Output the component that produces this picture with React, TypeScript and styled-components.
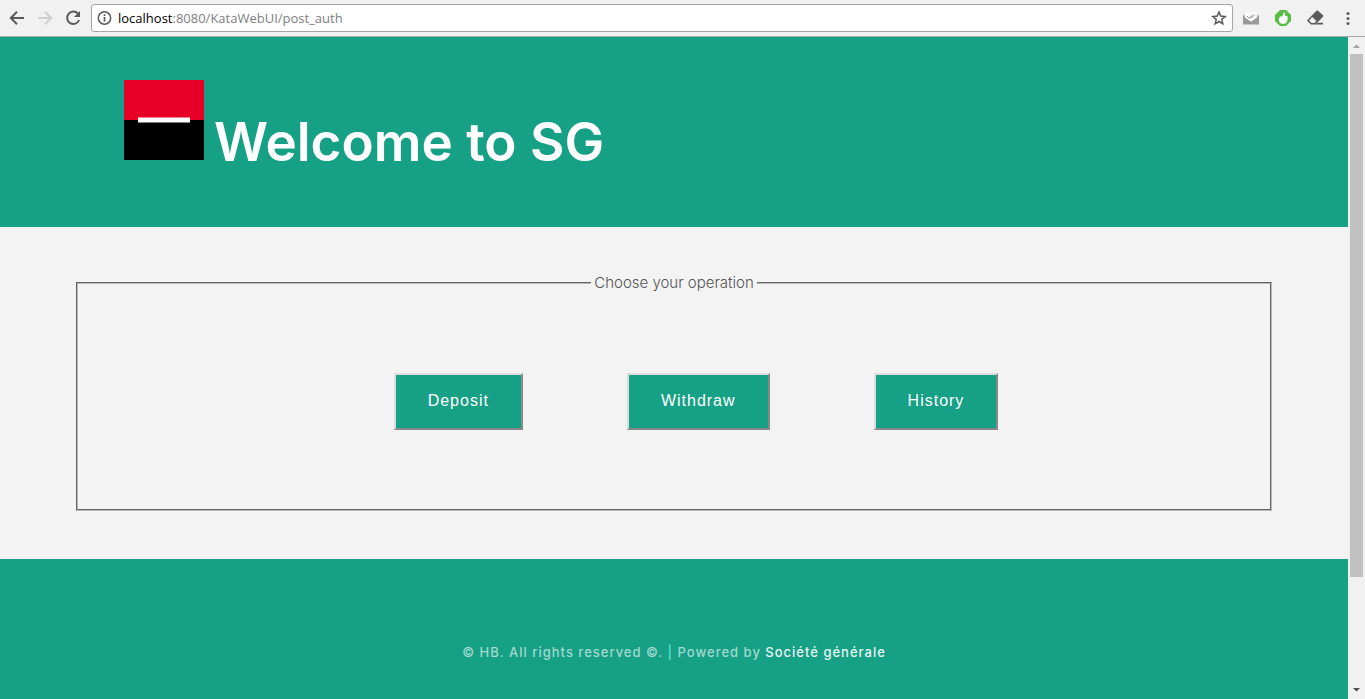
import React from "react";
import styled, { createGlobalStyle } from "styled-components";

const GlobalStyle = createGlobalStyle`
  * { box-sizing: border-box; }
  body { margin: 0; background: #f3f3f3; }
`;

const Window = styled.div`
  display: flex;
  flex-direction: column;
  height: 100vh;
  overflow: hidden;
`;

const Toolbar = styled.div`
  display: flex;
  flex: none;
  align-items: center;
  height: 37px;
  padding: 0 9px 0 8px;
  background: #f1f1f1;
  border-bottom: 1px solid #a9a9a9;
`;

const IconButton = styled.button<{ $gap?: number }>`
  display: flex;
  flex: none;
  padding: 0;
  margin-right: ${(p) => p.$gap ?? 0}px;
  border: 0;
  background: none;
  color: #5a5a5a;
  &:disabled { color: #d0d0d0; }
`;

const AddressBar = styled.div`
  display: flex;
  flex: 1;
  align-items: center;
  gap: 6px;
  height: 28px;
  margin-right: 9px;
  padding: 0 5px;
  background: #fff;
  border: 1px solid #a6a6a6;
  border-radius: 3px;
`;

const Url = styled.span`
  flex: 1;
  color: #808080;
  font: 13px/20px "Open Sans", sans-serif;
  b { color: #000; font-weight: 400; }
`;

const Viewport = styled.div`
  display: flex;
  flex: 1;
  min-height: 0;
`;

const Page = styled.div`
  display: flex;
  flex: 1;
  flex-direction: column;
  overflow: hidden;
  font-family: Inter, sans-serif;
`;

const Scrollbar = styled.div`
  display: flex;
  flex: none;
  flex-direction: column;
  align-items: center;
  width: 17px;
  background: #f1f1f1;
`;

const Track = styled.div`
  flex: 1;
  width: 13px;
`;

const Thumb = styled.div`
  height: calc(100% * 5 / 6);
  background: #c1c1c1;
`;

const Header = styled.header`
  display: flex;
  flex: none;
  align-items: flex-end;
  gap: 10px;
  padding: 43px 124px 67px;
  background: #16a085;
`;

const Title = styled.h1`
  height: 60px;
  margin: 0;
  color: #fff;
  font-size: 53px;
  font-weight: 600;
  line-height: 84px;
  white-space: nowrap;
`;

const Main = styled.main`
  flex: none;
  padding: 46px 76px 48px;
  background: #f3f3f3;
`;

const Operations = styled.fieldset`
  min-width: 0;
  margin: 0;
  padding: 80px 0 79px;
  border: 2px groove #b8b8b8;
`;

const Legend = styled.legend`
  margin: 0 auto;
  padding: 0 3px;
  color: #555;
  font-size: 15px;
  font-weight: 300;
  line-height: 20px;
`;

const Actions = styled.div`
  display: flex;
  justify-content: center;
  gap: 104px;
  padding-left: 44px;
`;

const Action = styled.button`
  height: 57px;
  padding: 0 32px 2px;
  border: 2px solid;
  border-color: #ddd #888 #888 #ddd;
  background: #16a085;
  color: #fff;
  font: 16px/20px "Liberation Sans", sans-serif;
  letter-spacing: 1px;
`;

const Footer = styled.footer`
  flex: 1;
  padding-top: 83px;
  background: #16a085;
  color: #a2d9ce;
  font-size: 13px;
  font-weight: 500;
  line-height: 20px;
  letter-spacing: 1px;
  text-align: center;
  a { color: #e8f6f3; text-decoration: none; }
`;

const Divider = styled.span`
  color: #5ce0d4;
`;

const ArrowIcon = ({ flip = false }: { flip?: boolean }) => (
  <svg width="18" height="18" viewBox="0 0 18 18" fill="none" stroke="currentColor" strokeWidth="2">
    <path d={flip ? "M2 9h13M9 2.8 15.2 9 9 15.2" : "M16 9H3M9 2.8 2.8 9 9 15.2"} />
  </svg>
);

export default function App() {
  return (
    <Window>
      <GlobalStyle />
      <Toolbar>
        <IconButton $gap={10} aria-label="Back"><ArrowIcon /></IconButton>
        <IconButton $gap={10} aria-label="Forward" disabled><ArrowIcon flip /></IconButton>
        <IconButton $gap={9} aria-label="Reload">
          <svg width="18" height="18" viewBox="0 0 18 18" fill="none" stroke="currentColor" strokeWidth="2">
            <path d="M14 4.7A6.2 6.2 0 1 0 15.1 11" />
            <path d="M16 2v6h-6z" fill="currentColor" stroke="none" />
          </svg>
        </IconButton>
        <AddressBar>
          <svg width="15" height="16" viewBox="0 0 15 16" fill="none" stroke="#5a5a5a">
            <circle cx="7.5" cy="8" r="6.2" strokeWidth="1.5" />
            <path d="M7.5 7v4.5M7.5 4.2v1.7" strokeWidth="1.7" />
          </svg>
          <Url><b>localhost</b>:8080/KataWebUI/post_auth</Url>
          <IconButton aria-label="Bookmark this page">
            <svg width="16" height="16" viewBox="0 0 16 16" fill="none" stroke="currentColor" strokeWidth="1.5">
              <path d="m8 2 1.7 4.1 4.5.4-3.4 2.9 1 4.4L8 11.5l-3.8 2.3 1-4.4-3.4-2.9 4.5-.4z" />
            </svg>
          </IconButton>
        </AddressBar>
        <IconButton $gap={15} aria-label="Mail checker">
          <svg width="18" height="16" viewBox="0 0 18 16">
            <path d="M1 5h16v9.500H1z" fill="#999" />
            <path d="M1 5.500 3 3.500h12l2 2L9 11.500z" fill="#c4c4c4" />
            <path d="M3 2.500h12v5L9 11.500 3 7.500z" fill="#fff" />
            <path d="m5 6 2.200 2.200L10.500 5M8.200 7.200l1 1L13 4.500" fill="none" stroke="#888" />
          </svg>
        </IconButton>
        <IconButton $gap={16} aria-label="Thumbs up">
          <svg width="16" height="16" viewBox="0 0 16 16">
            <path d="M5 0h6l5 5v6l-5 5H5l-5-5V5z" fill="#57bd45" />
            <path d="M9 2c1.300.5 1.100 2.300.7 3.600l2.400.4c1.100 1.200.7 4.800-.7 6.700-1.300 1.300-5.300 1.300-6.600 0C3.500 11 3.600 8 5 6.500 5.500 6 6 7 6.500 6.500 7.800 5.500 8.300 4 9 2z" fill="#fff" />
          </svg>
        </IconButton>
        <IconButton $gap={16} aria-label="Eraser">
          <svg width="17" height="16" viewBox="0 0 17 16">
            <path d="M9.500.8q.8-.6 1.500 0l5 4.500q.6.7 0 1.500L8.500 14.500H4L.6 11.200q-.6-.8 0-1.500z" fill="#5a5a5a" />
            <path d="m5.200 7 4.300 4-2.200 2H4.600L2 10.400z" fill="#f1f1f1" />
            <path d="M10.500 12.800H16v1.700H8.500z" fill="#5a5a5a" />
          </svg>
        </IconButton>
        <IconButton aria-label="Browser menu">
          <svg width="16" height="16" viewBox="0 0 16 16" fill="currentColor">
            <circle cx="8" cy="3.5" r="1.5" />
            <circle cx="8" cy="8.5" r="1.5" />
            <circle cx="8" cy="13.5" r="1.5" />
          </svg>
        </IconButton>
      </Toolbar>
      <Viewport>
        <Page>
          <Header>
            <svg width="80" height="80" viewBox="0 0 80 80" role="img" aria-label="Société générale">
              <path d="M0 0h80v40H0z" fill="#e60028" />
              <path d="M0 40h80v40H0z" />
              <path d="M14 37.5h52v5H14z" fill="#fff" />
            </svg>
            <Title>Welcome to SG</Title>
          </Header>
          <Main>
            <Operations>
              <Legend>Choose your operation</Legend>
              <Actions>
                <Action type="button">Deposit</Action>
                <Action type="button">Withdraw</Action>
                <Action type="button">History</Action>
              </Actions>
            </Operations>
          </Main>
          <Footer>
            © HB. All rights reserved ©. <Divider>|</Divider> Powered by <a href="#societe-generale">Société générale</a>
          </Footer>
        </Page>
        <Scrollbar aria-hidden="true">
          <svg width="17" height="17"><path d="M5 11h7L8.5 7.500z" fill="#a3a3a3" /></svg>
          <Track><Thumb /></Track>
          <svg width="17" height="17"><path d="M5 6h7L8.5 9.500z" fill="#505050" /></svg>
        </Scrollbar>
      </Viewport>
    </Window>
  );
}
